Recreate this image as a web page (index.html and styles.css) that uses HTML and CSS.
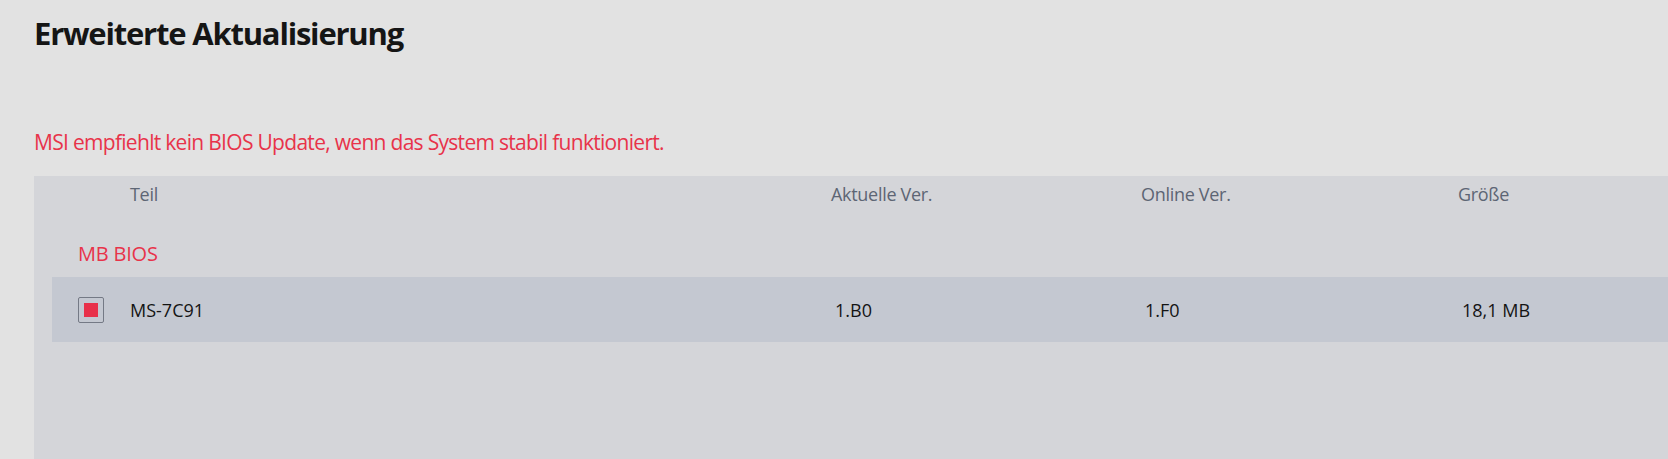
FILE: index.html
```html
<!DOCTYPE html>
<html lang="de">
<head>
<meta charset="utf-8">
<title>Erweiterte Aktualisierung</title>
<link rel="stylesheet" href="styles.css">
</head>
<body>
<div class="page">
  <h1 class="title">Erweiterte Aktualisierung</h1>
  <p class="warning">MSI empfiehlt kein BIOS Update, wenn das System stabil funktioniert.</p>
  <section class="panel">
    <div class="grid head">
      <span></span>
      <span>Teil</span>
      <span>Aktuelle Ver.</span>
      <span>Online Ver.</span>
      <span>Größe</span>
    </div>
    <div class="group">MB BIOS</div>
    <div class="grid row">
      <span class="check-cell"><span class="checkbox"><span class="check-fill"></span></span></span>
      <span class="cell">MS-7C91</span>
      <span class="cell val">1.B0</span>
      <span class="cell val">1.F0</span>
      <span class="cell val">18,1 MB</span>
    </div>
  </section>
</div>
</body>
</html>
```
FILE: styles.css
```css
* { box-sizing: border-box; }
html, body { margin: 0; padding: 0; }
body {
  background: #e2e2e2;
  font-family: "Open Sans", "Noto Sans", sans-serif;
  color: #141414;
}
.page {
  height: 100vh;
  display: flex;
  flex-direction: column;
  padding-left: 34px;
  overflow: hidden;
}
.title {
  margin: 13px 0 0 0;
  font-size: 31px;
  line-height: 40px;
  font-weight: 700;
  letter-spacing: -1.2px;
  color: #151515;
}
.warning {
  margin: 74px 0 0 0;
  font-size: 21px;
  line-height: 30px;
  letter-spacing: -0.7px;
  color: #e8334a;
}
.panel {
  margin-top: 19px;
  flex: 1;
  background: #d4d5d9;
  padding-left: 18px;
}
.grid {
  display: grid;
  grid-template-columns: 78px 701px 310px 317px 1fr;
  align-items: center;
}
.head {
  height: 36px;
  font-size: 18px;
  letter-spacing: -0.3px;
  color: #5d6574;
}
.group {
  padding: 24px 0 5px 26px;
  font-size: 20px;
  line-height: 36px;
  letter-spacing: -0.2px;
  color: #e8334a;
}
.row {
  height: 65px;
  background: #c4c8d1;
  font-size: 18px;
  color: #141414;
}
.check-cell { padding-left: 26px; display: flex; }
.checkbox {
  width: 26px;
  height: 26px;
  border: 1.5px solid #747985;
  border-radius: 2px;
  display: flex;
  align-items: center;
  justify-content: center;
}
.check-fill {
  width: 14px;
  height: 14px;
  background: #e8304a;
}
.val { padding-left: 4px; }
```
